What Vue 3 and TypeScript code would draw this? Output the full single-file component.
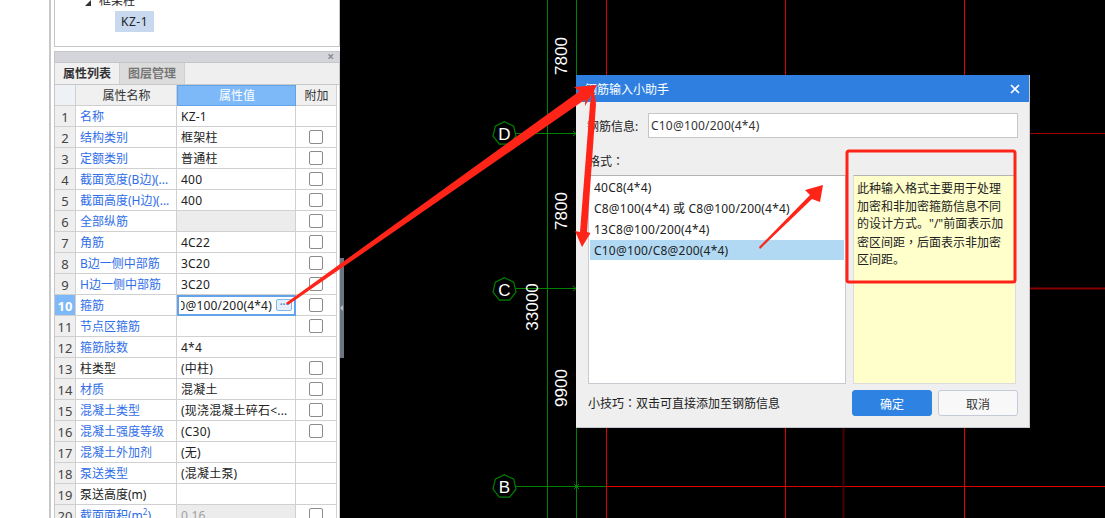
<template>
  <div class="page">
    <!-- 左侧属性面板 -->
    <aside class="side">
      <div class="tree">
        <div class="tree__node"><span class="tree__caret"></span>框架柱</div>
        <div class="tree__leaf">KZ-1</div>
      </div>
      <section class="props">
        <div class="props__head"><span class="props__close">×</span></div>
        <div class="tabs">
          <div class="tab tab--on">属性列表</div>
          <div class="tab">图层管理</div>
        </div>
        <div class="row row--head">
          <div class="cell cell--no"></div>
          <div class="cell cell--center">属性名称</div>
          <div class="cell cell--center cell--active">属性值</div>
          <div class="cell cell--center">附加</div>
        </div>
        <div v-for="(r, i) in rows" :key="i" class="row">
          <div class="cell cell--no" :class="{ 'cell--no-on': i === 9 }">{{ i + 1 }}</div>
          <div class="cell cell--name" :class="{ 'cell--plain': r.plain }" v-html="r.name"></div>
          <div v-if="i === 9" class="cell cell--edit">
            <span class="edit__clip"><span class="edit__text">{{ r.value }}</span></span>
            <span class="edit__btn">···</span>
          </div>
          <div v-else class="cell cell--value" :class="{ 'cell--grey': r.grey, 'cell--dim': i === 19 }">{{ r.value }}</div>
          <div class="cell cell--check"><span v-if="r.check" class="check"></span></div>
        </div>
      </section>
    </aside>
    <div class="splitter"><span class="splitter__grip"></span></div>

    <!-- CAD 画布 -->
    <main class="canvas">
      <svg class="drawing" width="761" height="518" viewBox="344 0 761 518">
        <g stroke="#e00000" fill="none">
          <path d="M606.5 0V518M785.5 0V518M964.5 0V518M606 486.5H1105" />
          <path d="M843.5 300V518" stroke="#480000" stroke-width="2" />
          <path d="M1000 133.5H1105" stroke="#a00000" />
          <path d="M1000 288.5H1105" stroke="#860000" stroke-width="2" />
        </g>
        <g stroke="#008000" fill="none">
          <path d="M547.5 0V518M576.5 0V518" />
          <path d="M516 133.5H576M516 288.5H576M516 486.5H606" />
          <path d="M573 131l3 2.5l-3 2.5M573 286l3 2.5l-3 2.5M574 484l5 5M579 484l-5 5" />
          <polygon v-for="a in axes" :key="a.label" :points="heptagon(a.y)" stroke-width="1.2" />
        </g>
        <g fill="#fff" font-size="17" text-anchor="middle">
          <text v-for="a in axes" :key="a.label" x="504.5" :y="a.y + 6.5">{{ a.label }}</text>
        </g>
        <g fill="#fff" font-size="17" text-anchor="middle">
          <text v-for="d in dims" :key="d.y" :transform="`translate(${d.x} ${d.y}) rotate(-90)`">{{ d.text }}</text>
        </g>
      </svg>
    </main>

    <!-- 钢筋输入小助手 -->
    <div class="dialog">
      <header class="dialog__title">
        <span>钢筋输入小助手</span>
        <svg width="10" height="10" viewBox="0 0 10 10"><path d="M1 1L9 9M9 1L1 9" stroke="#fff" stroke-width="1.6" /></svg>
      </header>
      <div class="dialog__body">
        <div class="field">
          <label class="field__label">钢筋信息:</label>
          <div class="field__input">C10@100/200(4*4)</div>
        </div>
        <div class="format-label">格式<span class="punct">：</span></div>
        <div class="panes">
          <ul class="list">
            <li v-for="(f, i) in formats" :key="f" class="list__item" :class="{ 'list__item--on': i === 3 }">{{ f }}</li>
          </ul>
          <div class="note">此种输入格式主要用于处理加密和非加密箍筋信息不同的设计方式。"/"前面表示加密区间距<span class="punct">，</span>后面表示非加密区间距。</div>
        </div>
        <footer class="foot">
          <span class="foot__tip">小技巧<span class="punct">：</span>双击可直接添加至钢筋信息</span>
          <button class="btn btn--primary" type="button">确定</button>
          <button class="btn" type="button">取消</button>
        </footer>
      </div>
    </div>

    <!-- 标注用的红色箭头 -->
    <svg class="marks" width="1105" height="518">
      <g fill="#fe2418">
        <polygon points="286,303 288,305 585.2,99.5 585,106 597,85 574,87 579.4,91.3" />
        <polygon points="593,85 596,104 587,232 590.5,233 582,247 575,231 580,232 590,104" />
        <polygon points="759,247 760,249 812,199 820,202 823,185 805,190 810,195" />
      </g>
      <rect x="847" y="151" width="168" height="131" rx="2" fill="none" stroke="#fe2418" stroke-width="3" />
    </svg>
  </div>
</template>

<script setup lang="ts">
interface IRow {
  name: string
  value: string
  check: boolean
  plain?: boolean
  grey?: boolean
}

const rows: IRow[] = [
  { name: "名称", value: "KZ-1", check: false },
  { name: "结构类别", value: "框架柱", check: true },
  { name: "定额类别", value: "普通柱", check: true },
  { name: "截面宽度(B边)(...", value: "400", check: true },
  { name: "截面高度(H边)(...", value: "400", check: true },
  { name: "全部纵筋", value: "", check: true, grey: true },
  { name: "角筋", value: "4C22", check: true },
  { name: "B边一侧中部筋", value: "3C20", check: true },
  { name: "H边一侧中部筋", value: "3C20", check: true },
  { name: "箍筋", value: "C10@100/200(4*4)", check: true },
  { name: "节点区箍筋", value: "", check: true },
  { name: "箍筋肢数", value: "4*4", check: false },
  { name: "柱类型", value: "(中柱)", check: true, plain: true },
  { name: "材质", value: "混凝土", check: true },
  { name: "混凝土类型", value: "(现浇混凝土碎石<...", check: true },
  { name: "混凝土强度等级", value: "(C30)", check: true },
  { name: "混凝土外加剂", value: "(无)", check: false },
  { name: "泵送类型", value: "(混凝土泵)", check: false },
  { name: "泵送高度(m)", value: "", check: false, plain: true },
  { name: "截面面积(m<sup>2</sup>)", value: "0.16", check: true, grey: true },
]

const formats = ["40C8(4*4)", "C8@100(4*4) 或 C8@100/200(4*4)", "13C8@100/200(4*4)", "C10@100/C8@200(4*4)"]

const axes = [
  { label: "D", y: 133 },
  { label: "C", y: 289 },
  { label: "B", y: 486 },
]

const dims = [
  { text: "7800", x: 567, y: 56 },
  { text: "7800", x: 567, y: 211 },
  { text: "33000", x: 538, y: 307 },
  { text: "9900", x: 567, y: 388 },
]

// 轴号外框是一个七边形
function heptagon(cy: number): string {
  const pts: string[] = []
  for (let k = 0; k < 7; k++) {
    const t = -Math.PI / 2 + (k * 2 * Math.PI) / 7
    pts.push(`${(504.5 + 11.8 * Math.cos(t)).toFixed(1)},${(cy + 0.5 + 11.8 * Math.sin(t)).toFixed(1)}`)
  }
  return pts.join(" ")
}
</script>

<style>
html, body {
  margin: 0;
  background: #000;
  overflow: hidden;
}
</style>

<style scoped>
.page {
  position: relative;
  display: flex;
  width: 1105px;
  height: 518px;
  overflow: hidden;
  background: #000;
  font-family: "Noto Sans", "Noto Sans CJK SC", sans-serif;
  font-size: 12px;
  color: #222;
}
.punct {
  font-family: "Noto Sans CJK TC", sans-serif;
}

/*---------- 左侧 ----------*/
.side {
  box-sizing: border-box;
  width: 340px;
  height: 518px;
  flex: none;
  padding: 0 0 0 54px;
  background: #fff;
  overflow: hidden;
  position: relative;
}
.side::before {
  content: "";
  position: absolute;
  left: 49px;
  top: 0;
  bottom: 0;
  width: 1.5px;
  background: #c8c8c8;
}
.tree {
  box-sizing: border-box;
  height: 47px;
  border: 1px solid #c6c6ca;
  border-top: 0;
  overflow: hidden;
  background: #fff;
}
.tree__node {
  display: flex;
  align-items: center;
  height: 20px;
  margin-top: -10px;
  padding-left: 42px;
  font-size: 12px;
}
.tree__caret {
  width: 0;
  height: 0;
  margin: 5px 8px 0 -12px;
  border-left: 6px solid transparent;
  border-bottom: 6px solid #333;
}
.tree__leaf {
  width: 39px;
  height: 21px;
  line-height: 21px;
  margin: 1px 0 0 60px;
  text-align: center;
  letter-spacing: 0.5px;
  background: #c8d8ef;
}
.props {
  box-sizing: border-box;
  height: 470px;
  margin-top: 4px;
  border: 1px solid #c6c6ca;
  border-bottom: 0;
  background: #fff;
}
.props__head {
  display: flex;
  justify-content: flex-end;
  align-items: center;
  height: 10px;
  padding-right: 5px;
  background: #d4d5da;
  border-bottom: 1px solid #c6c6ca;
}
.props__close {
  font-size: 12px;
  font-weight: 700;
  color: #8a8a8e;
  line-height: 10px;
}
.tabs {
  display: flex;
  height: 21px;
  background: #efefef;
  border-bottom: 1px solid #c8c8c8;
}
.tab {
  width: 64px;
  line-height: 21px;
  text-align: center;
  background: #dcdcdc;
  color: #777;
  border-right: 1px solid #cfcfcf;
  font-weight: 700;
}
.tab--on {
  background: #f0f0f0;
  color: #333;
}
.row {
  display: grid;
  grid-template-columns: 21px 101px 119px 41px;
  height: 21px;
  box-sizing: border-box;
}
.cell {
  box-sizing: border-box;
  height: 21px;
  padding: 0 3px 0 4px;
  line-height: 22px;
  border-right: 1px solid #d0d0d0;
  border-bottom: 1px solid #d0d0d0;
  white-space: nowrap;
  overflow: hidden;
  color: #222;
}
.cell--value {
  letter-spacing: 0.2px;
}
.row--head .cell {
  background: #f0f0f0;
  color: #333;
  font-size: 12px;
}
.cell--center {
  text-align: center;
}
.row--head .cell--active {
  background: #7db8f8;
  color: #fff;
  border: 1px solid #62a3ea;
  line-height: 20px;
}
.row--head .cell--no,
.cell--no {
  padding: 0;
  text-align: center;
  font-size: 13px;
  background: #efefef;
  color: #444;
}
.row--head .cell--no {
  background: #eef1f6;
}
.cell--no-on {
  background: #7db8f8;
  color: #fff;
  font-weight: 700;
}
.cell--name {
  color: #2f6ee8;
}
.cell--name :deep(sup) {
  font-size: 8px;
  line-height: 0;
}
.cell--plain {
  color: #222;
}
.cell--grey {
  background: #ececec;
}
.cell--dim {
  color: #a0a0a0;
}
.cell--edit {
  display: flex;
  align-items: center;
  gap: 4px;
  padding: 0 2px 0 2px;
  border: 2px solid #62a3ea;
}
.edit__clip {
  display: flex;
  justify-content: flex-end;
  flex: 1;
  min-width: 0;
  overflow: hidden;
  letter-spacing: 0.2px;
  line-height: 20px;
}
.edit__text {
  flex: none;
}
.edit__btn {
  flex: none;
  box-sizing: border-box;
  width: 16px;
  height: 12px;
  margin-bottom: 1px;
  border: 1px solid #7db8f0;
  border-radius: 2px;
  background: #e4effb;
  color: #4a8ad8;
  font-size: 10px;
  font-weight: 700;
  line-height: 8px;
  text-align: center;
}
.cell--check {
  display: flex;
  align-items: center;
  justify-content: center;
  padding: 0 0 1px 0;
}
.check {
  box-sizing: border-box;
  width: 14px;
  height: 14px;
  border: 1px solid #8c8c8c;
  border-radius: 2px;
  background: #fff;
}
.splitter {
  display: flex;
  align-items: center;
  width: 4px;
  height: 100px;
  margin-top: 258px;
  flex: none;
  background: #6b7680;
}
.splitter__grip {
  width: 0;
  height: 0;
  border-top: 3px solid transparent;
  border-bottom: 3px solid transparent;
  border-right: 3px solid #b8bec4;
}

/*---------- 画布 ----------*/
.canvas {
  flex: 1;
  background: #000;
}
.drawing {
  display: block;
  font-family: "Liberation Sans", sans-serif;
}

/*---------- 对话框 ----------*/
.dialog {
  position: absolute;
  left: 576px;
  top: 75px;
  box-sizing: border-box;
  width: 454px;
  height: 353px;
  background: #efefef;
  border-right: 1px solid #c5c8ce;
  border-bottom: 1px solid #c5c8ce;
}
.dialog__title {
  display: flex;
  align-items: center;
  justify-content: space-between;
  height: 27px;
  padding: 0 9px;
  background: #2e7fe0;
  color: #fff;
}
.dialog__body {
  padding: 11px 11px 0 12px;
}
.field {
  display: flex;
  align-items: center;
  height: 25px;
}
.field__label {
  width: 60px;
  flex: none;
  margin-left: -1px;
  margin-right: 1px;
}
.field__input {
  flex: 1;
  box-sizing: border-box;
  height: 25px;
  line-height: 23px;
  padding-left: 2px;
  background: #fff;
  border: 1px solid #c6c6c6;
  color: #333;
  letter-spacing: 0.2px;
}
.format-label {
  height: 37px;
  line-height: 46px;
}
.panes {
  display: flex;
  gap: 7px;
  height: 209px;
  padding-right: 2px;
}
.list {
  box-sizing: border-box;
  display: flex;
  flex-direction: column;
  gap: 1px;
  width: 258px;
  flex: none;
  margin: 0;
  padding: 1px;
  list-style: none;
  background: #fff;
  border: 1px solid #c8cad0;
  border-top-color: #b4b4b4;
}
.list__item {
  height: 20px;
  line-height: 22px;
  padding-left: 4px;
  white-space: nowrap;
  letter-spacing: 0.2px;
}
.list__item--on {
  background: #b1d9f3;
}
.note {
  flex: 1;
  box-sizing: border-box;
  padding: 4px 3px 3px;
  line-height: 17.5px;
  background: #ffffcc;
  border: 1px solid #dcdcdc;
  border-top-color: #b4b4b4;
  word-break: break-all;
}
.foot {
  display: flex;
  align-items: center;
  gap: 6px;
  margin-top: 6px;
  height: 26px;
}
.foot__tip {
  flex: 1;
}
.btn {
  box-sizing: border-box;
  width: 80px;
  height: 26px;
  padding: 1px 0 0;
  font: inherit;
  color: #333;
  background: #f8f8f8;
  border: 1px solid #c5cad8;
  border-radius: 3px;
}
.btn--primary {
  background: #2e82e2;
  border-color: #2e82e2;
  color: #fff;
}

.marks {
  position: absolute;
  left: 0;
  top: 0;
  pointer-events: none;
}
</style>
